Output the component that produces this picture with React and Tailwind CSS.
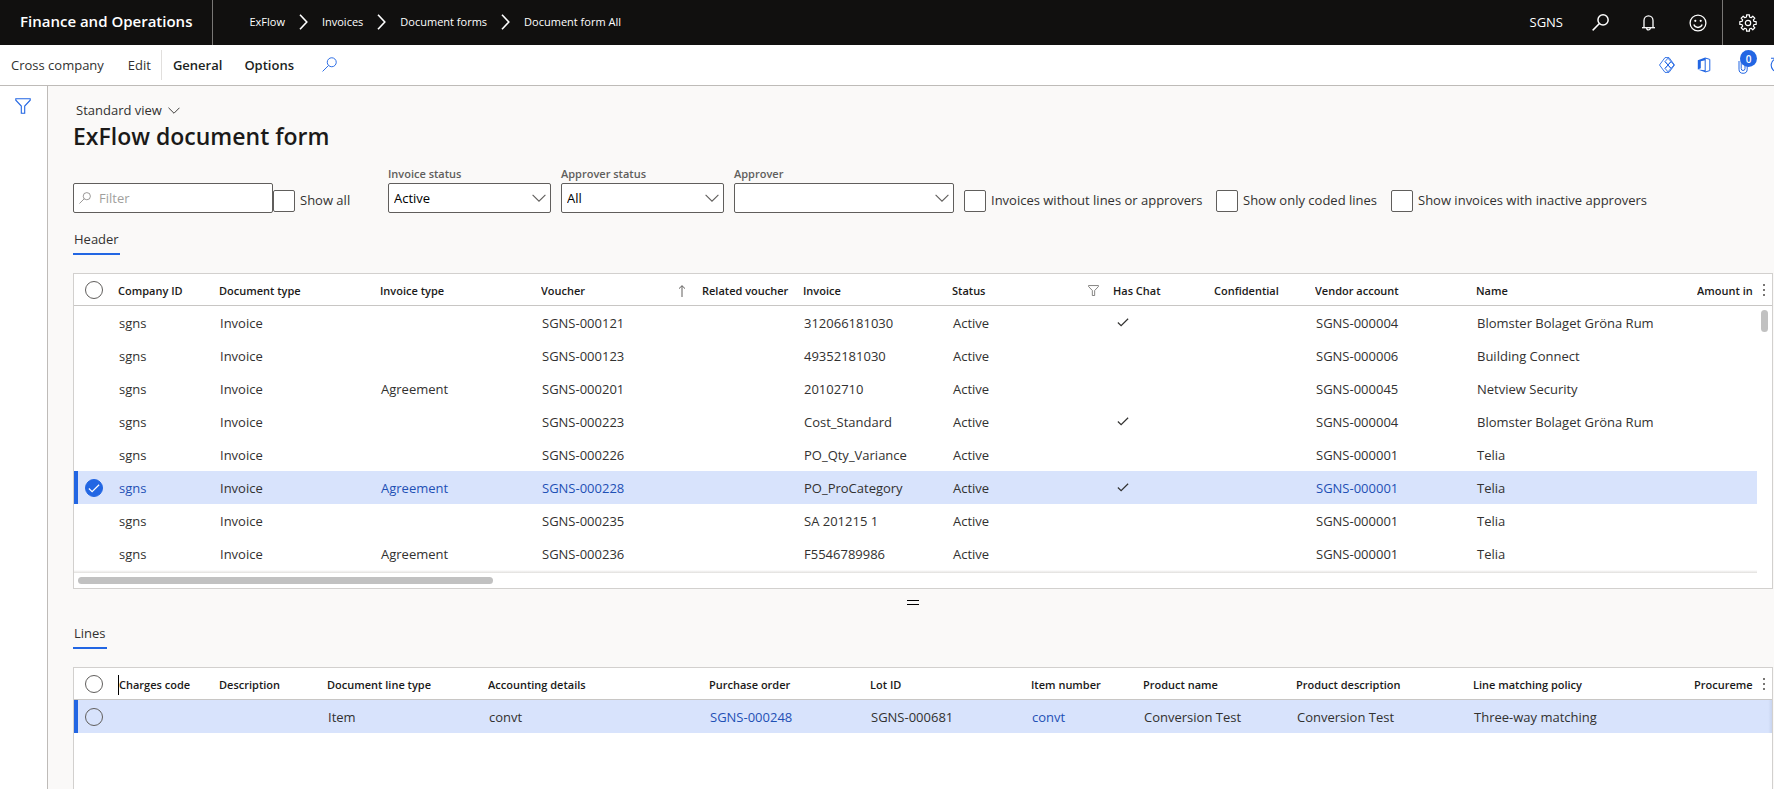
import React from "react";

function SearchIcon({ className, strokeWidth = 1.2 }) {
  return (
    <svg viewBox="0 0 16 16" fill="none" stroke="currentColor" strokeWidth={strokeWidth} className={className} aria-hidden="true">
      <circle cx="10.4" cy="5.6" r="4.8" />
      <path d="M7 9 L0.6 15.4" />
    </svg>
  );
}

function FunnelIcon({ className }) {
  return (
    <svg viewBox="0 0 16 16" fill="none" stroke="currentColor" strokeWidth="1.1" className={className} aria-hidden="true">
      <path d="M0.8 0.8 H15.2 V2.2 L9.7 8 V15.3 H6.3 V8 L0.8 2.2 Z" />
    </svg>
  );
}

function ChevronDown({ className }) {
  return (
    <svg viewBox="0 0 14 8" fill="none" stroke="currentColor" strokeWidth="1.1" className={className} aria-hidden="true">
      <path d="M0.6 0.8 L7 7.2 L13.4 0.8" />
    </svg>
  );
}

function ChevronRight() {
  return (
    <svg viewBox="0 0 9 16" fill="none" stroke="currentColor" strokeWidth="1.6" className="h-4 w-[9px]" aria-hidden="true">
      <path d="M1 0.8 L7.8 8 L1 15.2" />
    </svg>
  );
}

function CheckMark({ className }) {
  return (
    <svg viewBox="0 0 13 10" fill="none" stroke="currentColor" strokeWidth="1.3" className={className} aria-hidden="true">
      <path d="M0.8 5 L4.4 8.6 L12.2 0.8" />
    </svg>
  );
}

function BellIcon() {
  return (
    <svg viewBox="0 0 13 16" fill="none" stroke="currentColor" strokeWidth="1.3" className="h-4 w-[13px]" aria-hidden="true">
      <path d="M2 12.6 V5.6 A4.5 4.8 0 0 1 11 5.6 V12.6" />
      <path d="M0 12.7 H13" />
      <path d="M4.7 13 A1.8 1.9 0 0 0 8.3 13" />
    </svg>
  );
}

function SmileIcon() {
  return (
    <svg viewBox="0 0 18 18" fill="none" stroke="currentColor" strokeWidth="1.3" className="size-[18px]" aria-hidden="true">
      <circle cx="9" cy="9" r="7.9" />
      <path d="M4.8 10.6 A4.5 4.5 0 0 0 13.2 10.6" />
      <circle cx="6.3" cy="6.8" r="1.1" fill="currentColor" stroke="none" />
      <circle cx="11.7" cy="6.8" r="1.1" fill="currentColor" stroke="none" />
    </svg>
  );
}

const TEETH = [0, 45, 90, 135, 180, 225, 270, 315];

function GearIcon() {
  const points = TEETH.flatMap((deg) =>
    [
      [-14, 6.2],
      [-10, 8.3],
      [10, 8.3],
      [14, 6.2],
    ].map(([offset, radius]) => {
      const a = ((deg + offset) * Math.PI) / 180;
      return `${(9 + radius * Math.cos(a)).toFixed(2)},${(9 + radius * Math.sin(a)).toFixed(2)}`;
    })
  ).join(" ");
  return (
    <svg viewBox="0 0 18 18" fill="none" stroke="currentColor" strokeWidth="1.2" strokeLinejoin="round" className="size-[18px]" aria-hidden="true">
      <polygon points={points} />
      <circle cx="9" cy="9" r="2.7" />
    </svg>
  );
}

function DiamondsIcon() {
  return (
    <svg viewBox="0 0 16 16" fill="none" stroke="currentColor" strokeWidth="0.9" strokeLinejoin="round" className="size-4" aria-hidden="true">
      <path d="M6 0.6 H10 L15.5 8 L10 15.4 H6 L0.5 8 Z" />
      <path d="M9 1.2 L12 4.6 L9 8 L6 4.6 Z" />
      <path d="M9 8 L12 11.4 L9 14.8 L6 11.4 Z" />
      <path d="M12 4.6 L15 8 L12 11.4 L9 8 Z" />
      <path d="M6 4.6 L9 8 L6 11.4" />
    </svg>
  );
}

function OfficeIcon() {
  return (
    <svg viewBox="0 0 14 16" className="h-4 w-3.5" fill="none" aria-hidden="true">
      <path d="M8.2 0.6 L0.8 3.2 V12.4 L3.8 11.2 V4.2 L8.2 3.2 Z" fill="currentColor" />
      <path d="M0.8 12.4 L8.2 15.2 V13.2 Z" fill="currentColor" />
      <path d="M8.2 1 L12.8 2.4 V13.6 L8.2 15 Z" stroke="currentColor" strokeWidth="1" />
    </svg>
  );
}

function ClipIcon() {
  return (
    <svg viewBox="0 0 10 18" fill="none" stroke="currentColor" strokeWidth="1" className="h-[18px] w-2.5" aria-hidden="true">
      <path d="M7 5 V12.6 A1.8 1.8 0 0 1 3.2 12.6 V4 A3 3 0 0 1 9.2 4 V13.2 A4.1 4.1 0 0 1 1 13.2 V5" />
    </svg>
  );
}

function RefreshIcon() {
  return (
    <svg viewBox="0 0 16 16" fill="none" stroke="currentColor" strokeWidth="1.1" className="size-4" aria-hidden="true">
      <path d="M4.4 2.4 A6.8 6.8 0 1 0 11.6 2.4" />
      <path d="M1 1.2 H5 V5" />
    </svg>
  );
}

function MoreDots() {
  return (
    <svg viewBox="0 0 2 14" fill="#797775" className="h-3.5 w-0.5" aria-hidden="true">
      <rect x="0" y="1" width="2" height="2" />
      <rect x="0" y="6" width="2" height="2" />
      <rect x="0" y="11" width="2" height="2" />
    </svg>
  );
}

function SelectCircle({ label, checked = false }) {
  return (
    <span className="relative flex size-[18px]">
      <input
        type="checkbox"
        aria-label={label}
        defaultChecked={checked}
        className="size-[18px] appearance-none rounded-full border border-[#605e5c] bg-transparent checked:border-[#2266e3] checked:bg-[#2266e3]"
      />
      {checked && <CheckMark className="pointer-events-none absolute top-[5px] left-[3px] h-[9px] w-3 text-white" />}
    </span>
  );
}

function CheckField({ id, label, className = "" }) {
  return (
    <div className={`flex items-center gap-[5px] pb-px ${className}`}>
      <input id={id} type="checkbox" className="size-[22px] shrink-0 appearance-none rounded-xs border border-[#605e5c] bg-white checked:bg-[#2266e3]" />
      <label htmlFor={id} className="pb-0.5 whitespace-nowrap">{label}</label>
    </div>
  );
}

function SelectField({ id, label, options, className }) {
  return (
    <div className={`flex flex-col ${className}`}>
      <label htmlFor={id} className="text-[11px] leading-[18px] font-semibold text-[#605e5c]">{label}</label>
      <div className="relative flex">
        <select id={id} className="h-[30px] w-full appearance-none rounded-xs border border-[#605e5c] bg-white px-[5px] text-black">
          {options.map((o) => (
            <option key={o}>{o}</option>
          ))}
        </select>
        <ChevronDown className="pointer-events-none absolute top-[11px] right-[5px] h-2 w-3.5 text-[#605e5c]" />
      </div>
    </div>
  );
}

function Tab({ children }) {
  return (
    <button type="button" className="block border-b-2 border-[#2266e3] px-px pb-1 leading-5">
      {children}
    </button>
  );
}

const HEAD = "h-8 overflow-hidden border-b border-[#c8c6c4] p-0 pt-0.5 text-left text-[11px] font-semibold whitespace-nowrap text-[#1b1a19]";
const CELL = "h-[33px] overflow-hidden p-0 pl-px whitespace-nowrap";
const MARKED = "h-[33px] p-0 pl-[11px] shadow-[inset_4px_0_0_#2266e3]";

const headerColumns = [
  { label: "Company ID", width: 101 },
  { label: "Document type", width: 161 },
  { label: "Invoice type", width: 161 },
  { label: "Voucher", width: 161, mark: "sort" },
  { label: "Related voucher", width: 101 },
  { label: "Invoice", width: 149 },
  { label: "Status", width: 161, mark: "filter" },
  { label: "Has Chat", width: 101 },
  { label: "Confidential", width: 101 },
  { label: "Vendor account", width: 161 },
  { label: "Name", width: 221 },
  { label: "Amount in" },
];

const invoices = [
  { voucher: "SGNS-000121", invoice: "312066181030", chat: true, vendor: "SGNS-000004", name: "Blomster Bolaget Gröna Rum" },
  { voucher: "SGNS-000123", invoice: "49352181030", vendor: "SGNS-000006", name: "Building Connect" },
  { type: "Agreement", voucher: "SGNS-000201", invoice: "20102710", vendor: "SGNS-000045", name: "Netview Security" },
  { voucher: "SGNS-000223", invoice: "Cost_Standard", chat: true, vendor: "SGNS-000004", name: "Blomster Bolaget Gröna Rum" },
  { voucher: "SGNS-000226", invoice: "PO_Qty_Variance", vendor: "SGNS-000001", name: "Telia" },
  { type: "Agreement", voucher: "SGNS-000228", invoice: "PO_ProCategory", chat: true, vendor: "SGNS-000001", name: "Telia", selected: true },
  { voucher: "SGNS-000235", invoice: "SA 201215 1", vendor: "SGNS-000001", name: "Telia" },
  { type: "Agreement", voucher: "SGNS-000236", invoice: "F5546789986", vendor: "SGNS-000001", name: "Telia" },
];

const lineColumns = [
  { label: "Charges code", width: 101, caret: true },
  { label: "Description", width: 108 },
  { label: "Document line type", width: 161 },
  { label: "Accounting details", width: 221 },
  { label: "Purchase order", width: 161 },
  { label: "Lot ID", width: 161 },
  { label: "Item number", width: 112 },
  { label: "Product name", width: 153 },
  { label: "Product description", width: 177 },
  { label: "Line matching policy", width: 221 },
  { label: "Procureme" },
];

function Columns({ columns }) {
  return (
    <colgroup>
      <col style={{ width: 44 }} />
      {columns.map((c) => (
        <col key={c.label} style={c.width ? { width: c.width } : undefined} />
      ))}
    </colgroup>
  );
}

function HeadRow({ columns }) {
  return (
    <thead>
      <tr>
        <th className="h-8 border-b border-[#c8c6c4] p-0 pl-[11px]">
          <SelectCircle label="Select all rows" />
        </th>
        {columns.map((c) => (
          <th key={c.label} scope="col" className={HEAD}>
            <span className={`flex items-center justify-between pr-2.5 ${c.caret ? "border-l border-black" : ""}`}>
              {c.label}
              {c.mark === "sort" && (
                <svg viewBox="0 0 8 12" fill="none" stroke="currentColor" strokeWidth="1" className="mr-1.5 h-3 w-2 text-[#605e5c]" aria-label="Sorted ascending">
                  <path d="M4 12 V0.8 M1 3.6 L4 0.7 L7 3.6" />
                </svg>
              )}
              {c.mark === "filter" && <FunnelIcon className="mr-1 size-[11px] text-[#605e5c]" />}
            </span>
          </th>
        ))}
      </tr>
    </thead>
  );
}

function RecordLink({ children, active }) {
  return (
    <a href="#" className={active ? "text-[#1f50b5]" : ""}>
      {children}
    </a>
  );
}

export default function App() {
  return (
    <div className="flex min-h-screen flex-col overflow-x-hidden bg-[#faf9f8] font-['Open_Sans','Noto_Sans',sans-serif] text-[13px] leading-5 text-[#323130]">
      <header className="flex h-[45px] items-stretch bg-[#11100f] text-white">
        <a href="#" className="flex items-center border-r border-[#797775] pr-5 pb-1 pl-5 text-[15px] font-semibold">
          Finance and Operations
        </a>
        <nav className="flex flex-1 items-center gap-3.5 pb-0.5 pl-9 text-[11px] font-medium" aria-label="Breadcrumb">
          <a href="#">ExFlow</a>
          <ChevronRight />
          <a href="#">Invoices</a>
          <ChevronRight />
          <a href="#">Document forms</a>
          <ChevronRight />
          <a href="#">Document form All</a>
        </nav>
        <div className="flex items-center">
          <button type="button" className="pr-[15px] pb-0.5 pl-3.5">SGNS</button>
          <button type="button" aria-label="Search" className="flex w-11 justify-center">
            <SearchIcon className="size-[17px]" strokeWidth={1.4} />
          </button>
          <button type="button" aria-label="Notifications" className="flex w-[52px] justify-center">
            <BellIcon />
          </button>
          <button type="button" aria-label="Feedback" className="flex w-12 justify-center">
            <SmileIcon />
          </button>
          <button type="button" aria-label="Settings" className="flex h-full w-[52px] items-center border-l border-[#797775] pl-4">
            <GearIcon />
          </button>
        </div>
      </header>

      <div className="flex h-[41px] items-center justify-between overflow-hidden border-b border-[#bebbb8] bg-white">
        <div className="flex items-center pl-[11px]">
          <button type="button">Cross company</button>
          <button type="button" className="ml-6">Edit</button>
          <span className="ml-2.5 h-[30px] w-px bg-[#e1dfdd]" />
          <button type="button" className="ml-[11px] font-semibold text-[#201f1e]">General</button>
          <button type="button" className="ml-[22px] font-semibold text-[#201f1e]">Options</button>
          <button type="button" aria-label="Search actions" className="ml-7 pb-0.5 text-[#2266e3]">
            <SearchIcon className="size-[15px]" strokeWidth={1} />
          </button>
        </div>
        <div className="-mr-3 flex items-center text-[#2266e3]">
          <button type="button" aria-label="Power Apps" className="mr-[22px]">
            <DiamondsIcon />
          </button>
          <button type="button" aria-label="Open in Microsoft Office" className="mr-[27px]">
            <OfficeIcon />
          </button>
          <button type="button" aria-label="Attachments" className="relative mr-[22px]">
            <ClipIcon />
            <span className="absolute -top-1.5 left-0.5 flex size-[17px] items-center justify-center rounded-full bg-[#2266e3] text-[10px] leading-none font-semibold text-white">
              0
            </span>
          </button>
          <button type="button" aria-label="Refresh">
            <RefreshIcon />
          </button>
        </div>
      </div>

      <div className="flex flex-1">
        <aside className="w-12 shrink-0 border-r border-[#bebbb8] bg-white pt-3 pl-[15px] text-[#2266e3]">
          <button type="button" aria-label="Show filters">
            <FunnelIcon className="size-4" />
          </button>
        </aside>

        <main className="flex min-w-0 flex-1 flex-col pt-3.5 pr-px pl-[25px]">
          <button type="button" className="flex items-center gap-1.5 self-start pl-[3px]">
            Standard view
            <ChevronDown className="h-[7px] w-3" />
          </button>
          <h1 className="text-[23px] leading-8 font-semibold text-[#1b1a19]">ExFlow document form</h1>

          <div className="mt-[13px] flex items-end">
            <div className="flex h-[30px] w-[200px] items-center gap-2 rounded-xs border border-[#605e5c] bg-white pl-[5px]">
              <SearchIcon className="size-3 shrink-0 text-[#797775]" strokeWidth={1} />
              <input aria-label="Filter" placeholder="Filter" className="w-full min-w-0 outline-none placeholder:text-[#a19f9d]" />
            </div>
            <CheckField id="show-all" label="Show all" className="w-[115px]" />
            <SelectField id="invoice-status" label="Invoice status" options={["Active", "All"]} className="w-[163px]" />
            <SelectField id="approver-status" label="Approver status" options={["All", "Active"]} className="ml-2.5 w-[163px]" />
            <SelectField id="approver" label="Approver" options={[""]} className="ml-2.5 w-[220px]" />
            <CheckField id="without-lines" label="Invoices without lines or approvers" className="ml-2.5 w-[242px]" />
            <CheckField id="only-coded" label="Show only coded lines" className="ml-2.5 w-[165px]" />
            <CheckField id="inactive-approvers" label="Show invoices with inactive approvers" className="ml-2.5" />
          </div>

          <div className="mt-4 flex">
            <Tab>Header</Tab>
          </div>

          <section className="mt-[18px] border border-[#d2d0ce] bg-white" aria-label="Header">
            <div className="flex">
              <table className="w-full min-w-0 flex-1 table-fixed border-separate border-spacing-0">
                <Columns columns={headerColumns} />
                <HeadRow columns={headerColumns} />
                <tbody>
                  {invoices.map((r) => (
                    <tr key={r.voucher} className={r.selected ? "bg-[#d8e3fc]" : ""}>
                      <td className={r.selected ? MARKED : "p-0"}>
                        {r.selected && <SelectCircle label="Select row" checked />}
                      </td>
                      <td className={CELL}><RecordLink active={r.selected}>sgns</RecordLink></td>
                      <td className={CELL}>Invoice</td>
                      <td className={CELL}>{r.type && <RecordLink active={r.selected}>{r.type}</RecordLink>}</td>
                      <td className={CELL}><RecordLink active={r.selected}>{r.voucher}</RecordLink></td>
                      <td className={CELL} />
                      <td className={CELL}>{r.invoice}</td>
                      <td className={CELL}>Active</td>
                      <td className={CELL}>{r.chat && <CheckMark className="ml-[3px] h-[9px] w-3" />}</td>
                      <td className={CELL} />
                      <td className={CELL}><RecordLink active={r.selected}>{r.vendor}</RecordLink></td>
                      <td className={CELL}>{r.name}</td>
                      <td className={CELL} />
                    </tr>
                  ))}
                </tbody>
              </table>
              <div className="flex w-[15px] flex-col">
                <button type="button" aria-label="Grid options" className="flex h-8 items-center border-b border-[#c8c6c4] pl-1.5">
                  <MoreDots />
                </button>
                <span className="mx-1 mt-1 h-[22px] w-[7px] rounded-full bg-[#c1c1c1]" />
              </div>
            </div>
            <div className="mr-[15px] h-[3px] bg-gradient-to-b from-white to-[#e1dfdd]" />
            <div className="px-1 pt-1 pb-1">
              <div className="h-[7px] w-[415px] rounded-full bg-[#c1c1c1]" />
            </div>
          </section>

          <div className="flex h-[34px] justify-center pt-[11px] pr-5">
            <div role="separator" aria-orientation="horizontal" className="h-[5px] w-3 border-y border-black" />
          </div>

          <div className="flex">
            <Tab>Lines</Tab>
          </div>

          <section className="mt-[18px] flex flex-1 border border-b-0 border-[#d2d0ce] bg-white" aria-label="Lines">
            <div className="min-w-0 flex-1">
              <table className="w-full table-fixed border-separate border-spacing-0">
                <Columns columns={lineColumns} />
                <HeadRow columns={lineColumns} />
                <tbody>
                  <tr className="bg-[#d8e3fc]">
                    <td className={MARKED}><SelectCircle label="Select line" /></td>
                    <td className={CELL} />
                    <td className={CELL} />
                    <td className={CELL}>Item</td>
                    <td className={CELL}>convt</td>
                    <td className={CELL}><RecordLink active>SGNS-000248</RecordLink></td>
                    <td className={CELL}>SGNS-000681</td>
                    <td className={CELL}><RecordLink active>convt</RecordLink></td>
                    <td className={CELL}>Conversion Test</td>
                    <td className={CELL}>Conversion Test</td>
                    <td className={CELL}>Three-way matching</td>
                    <td className={CELL} />
                  </tr>
                </tbody>
              </table>
            </div>
            <div className="flex w-[15px] flex-col">
              <button type="button" aria-label="Grid options" className="flex h-8 items-center border-b border-[#c8c6c4] pl-1.5">
                <MoreDots />
              </button>
              <span className="h-[33px] bg-gradient-to-r from-[#d8e3fc] from-75% to-[#c8d4ee]" />
            </div>
          </section>
        </main>
      </div>
    </div>
  );
}
